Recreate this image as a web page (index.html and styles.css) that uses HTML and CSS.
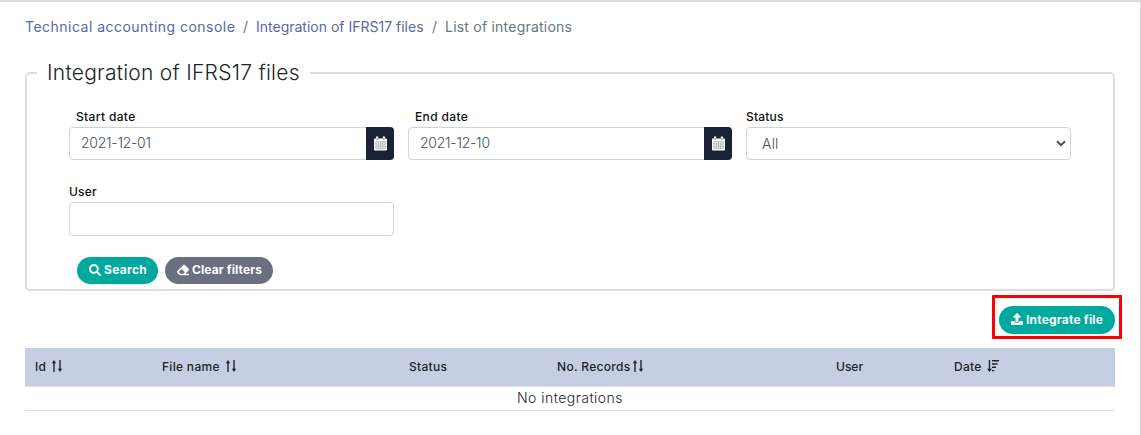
FILE: index.html
```html
<!DOCTYPE html>
<html lang="en">
<head>
<meta charset="utf-8">
<title>List of integrations</title>
<link rel="stylesheet" href="styles.css">
</head>
<body>
<main class="page">
  <nav class="breadcrumb">
    <a class="crumb-console" href="#">Technical accounting console</a><span class="sep">/</span><a class="crumb-files" href="#">Integration of IFRS17 files</a><span class="sep">/</span><span class="crumb-list">List of integrations</span>
  </nav>
  <fieldset class="filters">
    <legend>Integration of IFRS17 files</legend>
    <div class="fields">
      <div class="field">
        <label class="inset">Start date</label>
        <div class="control"><span class="value">2021-12-01</span><span class="addon"><svg class="calendar" viewBox="0 0 14 15"><path d="M0 3q0-1 1-1h12q1 0 1 1v11q0 1-1 1H1q-1 0-1-1z" fill="#fff"/><path d="M2.2 0h2.3v3H2.2zM9.5 0h2.3v3H9.5z" fill="#fff"/><path d="M2.8 2.7h1.4M9.9 2.7h1.4" stroke="#1a2238" stroke-width="1"/><path d="M2 5.5h10v7.5H2zM2 8h10M2 10.5h10M4.5 5.5V13M7 5.5V13M9.5 5.5V13" fill="none" stroke="#9299aa" stroke-width=".7"/></svg></span></div>
      </div>
      <div class="field">
        <label class="inset">End date</label>
        <div class="control"><span class="value">2021-12-10</span><span class="addon"><svg class="calendar" viewBox="0 0 14 15"><path d="M0 3q0-1 1-1h12q1 0 1 1v11q0 1-1 1H1q-1 0-1-1z" fill="#fff"/><path d="M2.2 0h2.3v3H2.2zM9.5 0h2.3v3H9.5z" fill="#fff"/><path d="M2.8 2.7h1.4M9.9 2.7h1.4" stroke="#1a2238" stroke-width="1"/><path d="M2 5.5h10v7.5H2zM2 8h10M2 10.5h10M4.5 5.5V13M7 5.5V13M9.5 5.5V13" fill="none" stroke="#9299aa" stroke-width=".7"/></svg></span></div>
      </div>
      <div class="field">
        <label>Status</label>
        <div class="control select"><span class="value">All</span><svg class="chevron" viewBox="0 0 10 7"><path d="M1 1.2l4 4 4-4" fill="none" stroke="#495057" stroke-width="2"/></svg></div>
      </div>
      <div class="field">
        <label>User</label>
        <div class="control tall"></div>
      </div>
    </div>
    <div class="actions">
      <button class="btn search"><svg class="icon" viewBox="0 0 512 512"><path d="M505 442.700L405.300 343c-4.500-4.500-10.600-7-17-7H372c27.600-35.300 44-79.700 44-128C416 93.100 322.900 0 208 0S0 93.100 0 208s93.100 208 208 208c48.300 0 92.700-16.400 128-44v16.300c0 6.400 2.500 12.500 7 17l99.700 99.700c9.400 9.400 24.600 9.400 33.900 0l28.300-28.300c9.400-9.400 9.400-24.600.1-34zM208 336c-70.700 0-128-57.200-128-128 0-70.700 57.200-128 128-128 70.700 0 128 57.200 128 128 0 70.700-57.200 128-128 128z"/></svg><span>Search</span></button>
      <button class="btn clear"><svg class="icon" viewBox="0 0 512 512"><path d="M497.900 273.900c18.800-18.700 18.800-49.100 0-67.900l-160-160c-18.700-18.700-49.100-18.800-67.900 0l-256 256c-18.800 18.700-18.800 49.100 0 67.900l96 96A48 48 0 0 0 144 480h356c6.600 0 12-5.400 12-12v-40c0-6.600-5.400-12-12-12H355.900zM195.300 211.300l137.400 137.400L265.400 416H150.600l-80-80z"/></svg><span>Clear filters</span></button>
    </div>
  </fieldset>
  <div class="toolbar">
    <div class="highlight">
      <button class="btn integrate"><svg class="icon" viewBox="0 0 512 512"><path d="M296 384h-80c-13.300 0-24-10.700-24-24V192h-87.700c-17.800 0-26.700-21.500-14.100-34.100L242.300 5.700c7.500-7.500 19.800-7.500 27.300 0l152.200 152.200c12.600 12.600 3.700 34.100-14.100 34.100H320v168c0 13.300-10.700 24-24 24zm216-8v112c0 13.300-10.700 24-24 24H24c-13.300 0-24-10.700-24-24V376c0-13.300 10.700-24 24-24h136v8c0 30.900 25.100 56 56 56h80c30.900 0 56-25.100 56-56v-8h136c13.300 0 24 10.700 24 24zm-124 88c0-11-9-20-20-20s-20 9-20 20 9 20 20 20 20-9 20-20zm64 0c0-11-9-20-20-20s-20 9-20 20 9 20 20 20 20-9 20-20z"/></svg><span>Integrate file</span></button>
    </div>
  </div>
  <section class="table">
    <div class="row head">
      <div class="cell"><span>Id</span><svg class="sort" viewBox="0 0 12 12"><path d="M3 12V2M9 0v10" stroke="currentColor" stroke-width="1.4"/><path d="M.8 3.200L3 0l2.200 3.200zM6.800 8.800L9 12l2.200-3.200z" fill="currentColor"/></svg></div>
      <div class="cell"><span>File name</span><svg class="sort" viewBox="0 0 12 12"><path d="M3 12V2M9 0v10" stroke="currentColor" stroke-width="1.4"/><path d="M.8 3.200L3 0l2.200 3.200zM6.800 8.800L9 12l2.200-3.200z" fill="currentColor"/></svg></div>
      <div class="cell"><span>Status</span></div>
      <div class="cell records"><span>No. Records</span><svg class="sort" viewBox="0 0 12 12"><path d="M3 12V2M9 0v10" stroke="currentColor" stroke-width="1.4"/><path d="M.8 3.200L3 0l2.200 3.200zM6.800 8.800L9 12l2.200-3.200z" fill="currentColor"/></svg></div>
      <div class="cell"><span class="plain">User</span></div>
      <div class="cell"><span>Date</span><svg class="sort" viewBox="0 0 12 12"><path d="M2.500 0v10M5 .8h7M5 4h5.500M5 7.200h4M5 10.600h2.300" stroke="currentColor" stroke-width="1.4"/><path d="M0 8.800L2.500 12 5 8.800z" fill="currentColor"/></svg></div>
    </div>
    <div class="empty"><span>No integrations</span></div>
  </section>
</main>
</body>
</html>
```
FILE: styles.css
```css
* { box-sizing: border-box; }
body { margin: 0; background: #fff; color: #212529; font-family: Inter, "Open Sans", sans-serif; }
.page { height: 435px; padding: 0 25px; border-top: 2px solid #ddd; border-right: 1px solid #ddd; overflow: hidden; }
.breadcrumb { display: flex; height: 58px; padding-top: 15px; font-size: 14px; line-height: 20px; color: #6c757d; white-space: nowrap; }
.breadcrumb a { color: #5a67a8; text-decoration: none; }
.breadcrumb .sep { width: 21px; text-align: center; }
.crumb-console { width: 210px; letter-spacing: 0.48px; }
.crumb-files { width: 168px; }
.crumb-list { letter-spacing: 0.22px; }
.filters { height: 231px; margin: 0; min-width: 0; padding: 0 42px; border: 2px solid #ddd; border-radius: 5px; }
legend { height: 26px; width: 273px; margin-left: -32px; padding: 0 10px; font-size: 21px; line-height: 26px; font-weight: 300; letter-spacing: 0.26px; white-space: nowrap; }
.fields { display: grid; grid-template-columns: 325px 324px 325px; column-gap: 14px; row-gap: 23px; padding-top: 22px; }
.field { display: flex; flex-direction: column; }
label { height: 19px; font-size: 12px; line-height: 18px; font-weight: 500; letter-spacing: 0.2px; color: #111; }
.inset { padding-left: 7px; letter-spacing: 0.35px; }
.control { display: flex; height: 33px; border: 1px solid #ced4da; border-radius: 4px; color: #495057; font-size: 14px; line-height: 30px; }
.control.tall { height: 34px; }
.value { flex: 1; padding-left: 11px; font-weight: 300; letter-spacing: -0.25px; }
.addon { display: flex; align-items: center; justify-content: center; width: 28px; margin: -1px; background: #1a2238; border-radius: 0 4px 4px 0; }
.calendar { width: 13px; height: 15px; margin-bottom: 1px; }
.select { align-items: center; padding-right: 4px; }
.select .value { padding-left: 15px; line-height: 33px; letter-spacing: 0.2px; }
.chevron { width: 10px; height: 7px; }
.actions { display: flex; gap: 7px; padding: 21px 0 0 8px; }
.btn { display: flex; align-items: center; gap: 3px; height: 27px; padding: 0 0 2px 12px; border: 0; border-radius: 14px; background: #00a99d; color: #fff; font-family: inherit; font-size: 12px; font-weight: 700; letter-spacing: 0.1px; white-space: nowrap; }
.search { width: 81px; letter-spacing: 0.3px; }
.clear { width: 108px; background: #6b7080; }
.integrate { width: 116px; height: 28px; letter-spacing: 0.2px; }
.icon { width: 12px; height: 12px; fill: #fff; flex: none; }
.toolbar { display: flex; justify-content: flex-end; height: 57px; padding-top: 4px; margin-right: -7px; }
.highlight { width: 130px; height: 44px; padding: 8px 4px; border: 3px solid #f00; border-radius: 1px; }
.row { display: grid; grid-template-columns: 127px 247px 148px 279px 118px 171px; }
.head { height: 38px; background: #c6cee3; }
.cell { display: flex; align-items: center; gap: 5px; padding: 0 0 1px 10px; font-size: 12px; font-weight: 500; letter-spacing: 0.3px; }
.records { gap: 2px; }
.plain { letter-spacing: 0; }
.sort { width: 12px; height: 12px; margin-bottom: 1px; }
.empty { height: 25px; border-top: 1px solid #ddd; border-bottom: 1px solid #ddd; text-align: center; font-size: 14px; line-height: 22px; font-weight: 300; letter-spacing: 0.48px; }
```
